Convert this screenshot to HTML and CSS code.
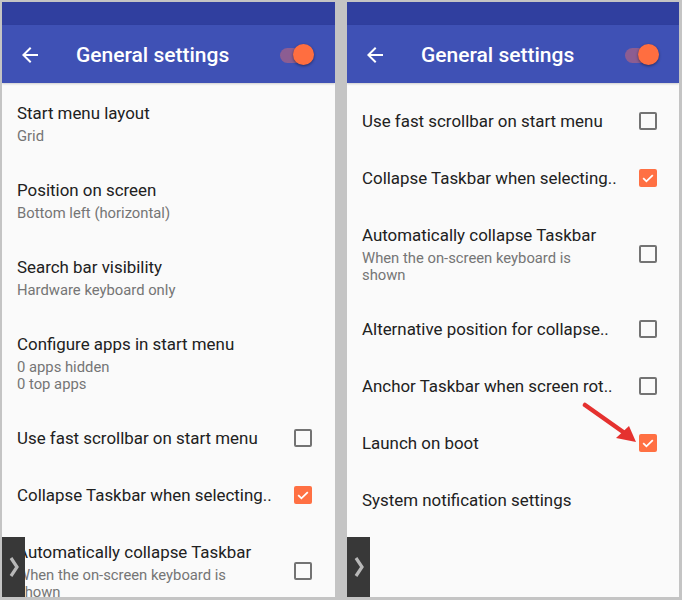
FILE: index.html
```html
<!DOCTYPE html>
<html>
<head>
<meta charset="utf-8">
<link rel="stylesheet" href="styles.css">
</head>
<body>
<div class="frame">
  <section class="panel panel-left">
    <div class="statusbar"></div>
    <header class="appbar">
      <svg class="back" viewBox="0 0 24 24" width="24" height="24"><path d="M20 11H7.83l5.59-5.59L12 4l-8 8 8 8 1.41-1.41L7.83 13H20v-2z" fill="#fff"/></svg>
      <h1 class="title">General settings</h1>
      <div class="switch"><span class="track"></span><span class="thumb"></span></div>
    </header>
    <div class="list list-left">
      <div class="pref"><div class="text"><div class="ptitle">Start menu layout</div><div class="psum">Grid</div></div></div>
      <div class="pref"><div class="text"><div class="ptitle">Position on screen</div><div class="psum">Bottom left (horizontal)</div></div></div>
      <div class="pref"><div class="text"><div class="ptitle">Search bar visibility</div><div class="psum">Hardware keyboard only</div></div></div>
      <div class="pref"><div class="text"><div class="ptitle">Configure apps in start menu</div><div class="psum">0 apps hidden<br>0 top apps</div></div></div>
      <div class="pref"><div class="text"><div class="ptitle">Use fast scrollbar on start menu</div></div><span class="cb"></span></div>
      <div class="pref"><div class="text"><div class="ptitle">Collapse Taskbar when selecting..</div></div><span class="cb on"><svg viewBox="0 0 18 18" width="18" height="18"><path d="M4.2 9.2l3.2 3.1 6.4-6.2" fill="none" stroke="#fff" stroke-width="1.8"/></svg></span></div>
      <div class="pref"><div class="text"><div class="ptitle">Automatically collapse Taskbar</div><div class="psum">When the on-screen keyboard is<br>shown</div></div><span class="cb"></span></div>
    </div>
    <div class="edge-tab"><svg viewBox="0 0 10 22" width="10" height="22"><path d="M2 2l6 9-6 9" fill="none" stroke="#b8b8b8" stroke-width="3.2"/></svg></div>
  </section>

  <section class="panel panel-right">
    <div class="statusbar"></div>
    <header class="appbar">
      <svg class="back" viewBox="0 0 24 24" width="24" height="24"><path d="M20 11H7.83l5.59-5.59L12 4l-8 8 8 8 1.41-1.41L7.83 13H20v-2z" fill="#fff"/></svg>
      <h1 class="title">General settings</h1>
      <div class="switch"><span class="track"></span><span class="thumb"></span></div>
    </header>
    <div class="list list-right">
      <div class="pref"><div class="text"><div class="ptitle">Use fast scrollbar on start menu</div></div><span class="cb"></span></div>
      <div class="pref"><div class="text"><div class="ptitle">Collapse Taskbar when selecting..</div></div><span class="cb on"><svg viewBox="0 0 18 18" width="18" height="18"><path d="M4.2 9.2l3.2 3.1 6.4-6.2" fill="none" stroke="#fff" stroke-width="1.8"/></svg></span></div>
      <div class="pref"><div class="text"><div class="ptitle">Automatically collapse Taskbar</div><div class="psum">When the on-screen keyboard is<br>shown</div></div><span class="cb"></span></div>
      <div class="pref"><div class="text"><div class="ptitle">Alternative position for collapse..</div></div><span class="cb"></span></div>
      <div class="pref"><div class="text"><div class="ptitle">Anchor Taskbar when screen rot..</div></div><span class="cb"></span></div>
      <div class="pref"><div class="text"><div class="ptitle">Launch on boot</div></div><span class="cb on"><svg viewBox="0 0 18 18" width="18" height="18"><path d="M4.2 9.2l3.2 3.1 6.4-6.2" fill="none" stroke="#fff" stroke-width="1.8"/></svg></span></div>
      <div class="pref"><div class="text"><div class="ptitle">System notification settings</div></div></div>
    </div>
    <svg class="red-arrow" viewBox="0 0 60 46" width="60" height="46"><path d="M3 3L44 32" stroke="#e5312f" stroke-width="4.5" stroke-linecap="round" fill="none"/><path d="M54 40L34 36L47 24Z" fill="#e5312f"/></svg>
    <div class="edge-tab"><svg viewBox="0 0 10 22" width="10" height="22"><path d="M2 2l6 9-6 9" fill="none" stroke="#b8b8b8" stroke-width="3.2"/></svg></div>
  </section>
</div>
</body>
</html>
```

FILE: styles.css
```css
html, body {
  margin: 0;
  padding: 0;
  background: #c4c4c4;
}
body {
  width: 682px;
  height: 600px;
  overflow: hidden;
  font-family: Roboto, "Noto Sans", "Liberation Sans", sans-serif;
}
.frame {
  display: flex;
  gap: 12px;
  padding: 2px 3px 3px 2px;
  height: 595px;
}
.panel {
  position: relative;
  background: #fafafa;
  height: 595px;
  overflow: hidden;
  display: flex;
  flex-direction: column;
}
.panel-left { width: 333px; }
.panel-right { width: 332px; }
.statusbar {
  height: 23px;
  background: #303f9f;
  flex: none;
}
.appbar {
  height: 58px;
  background: #3f51b5;
  display: flex;
  align-items: center;
  padding: 2px 0 0 16px;
  box-sizing: border-box;
  flex: none;
  box-shadow: 0 1px 2px rgba(0,0,0,0.18);
  position: relative;
  z-index: 1;
}
.back { display: block; flex: none; }
.title {
  margin: 0 0 0 34px;
  font-size: 21px;
  font-weight: 500;
  color: #fff;
  flex: 1;
  letter-spacing: 0;
}
.switch {
  position: relative;
  width: 44px;
  height: 24px;
  margin-right: 11px;
  flex: none;
}
.panel-right .switch { margin-right: 10px; }
.track {
  position: absolute;
  left: 0;
  top: 5px;
  width: 34px;
  height: 15px;
  border-radius: 7.5px;
  background: #9a5f8c;
  opacity: 0.85;
}
.thumb {
  position: absolute;
  left: 13px;
  top: 1px;
  width: 21px;
  height: 21px;
  border-radius: 50%;
  background: #ff6e40;
  box-shadow: 0 1px 3px rgba(0,0,0,0.45);
}
.list { flex: 1; }
.list-left { padding-top: 1.5px; }
.list-right { padding-top: 9.5px; }
.pref {
  display: flex;
  align-items: center;
  padding: 17px 23px 17px 15px;
}
.text { flex: 1; min-width: 0; }
.ptitle {
  font-size: 16.9px;
  line-height: 23px;
  color: #212121;
  white-space: nowrap;
}
.psum {
  margin-top: 3px;
  font-size: 14.8px;
  line-height: 17px;
  color: #757575;
}
.panel-right .pref { padding-right: 22px; }
.cb {
  flex: none;
  width: 18px;
  height: 18px;
  box-sizing: border-box;
  border: 2px solid #737373;
  border-radius: 2px;
  position: relative;
}
.cb.on {
  border: none;
  background: #ff7043;
}
.cb svg { display: block; }
.edge-tab {
  position: absolute;
  left: 0;
  bottom: 0;
  width: 23px;
  height: 60px;
  background: #383838;
  display: flex;
  align-items: center;
  justify-content: center;
}
.red-arrow {
  position: absolute;
  left: 235px;
  top: 400px;
}
```
